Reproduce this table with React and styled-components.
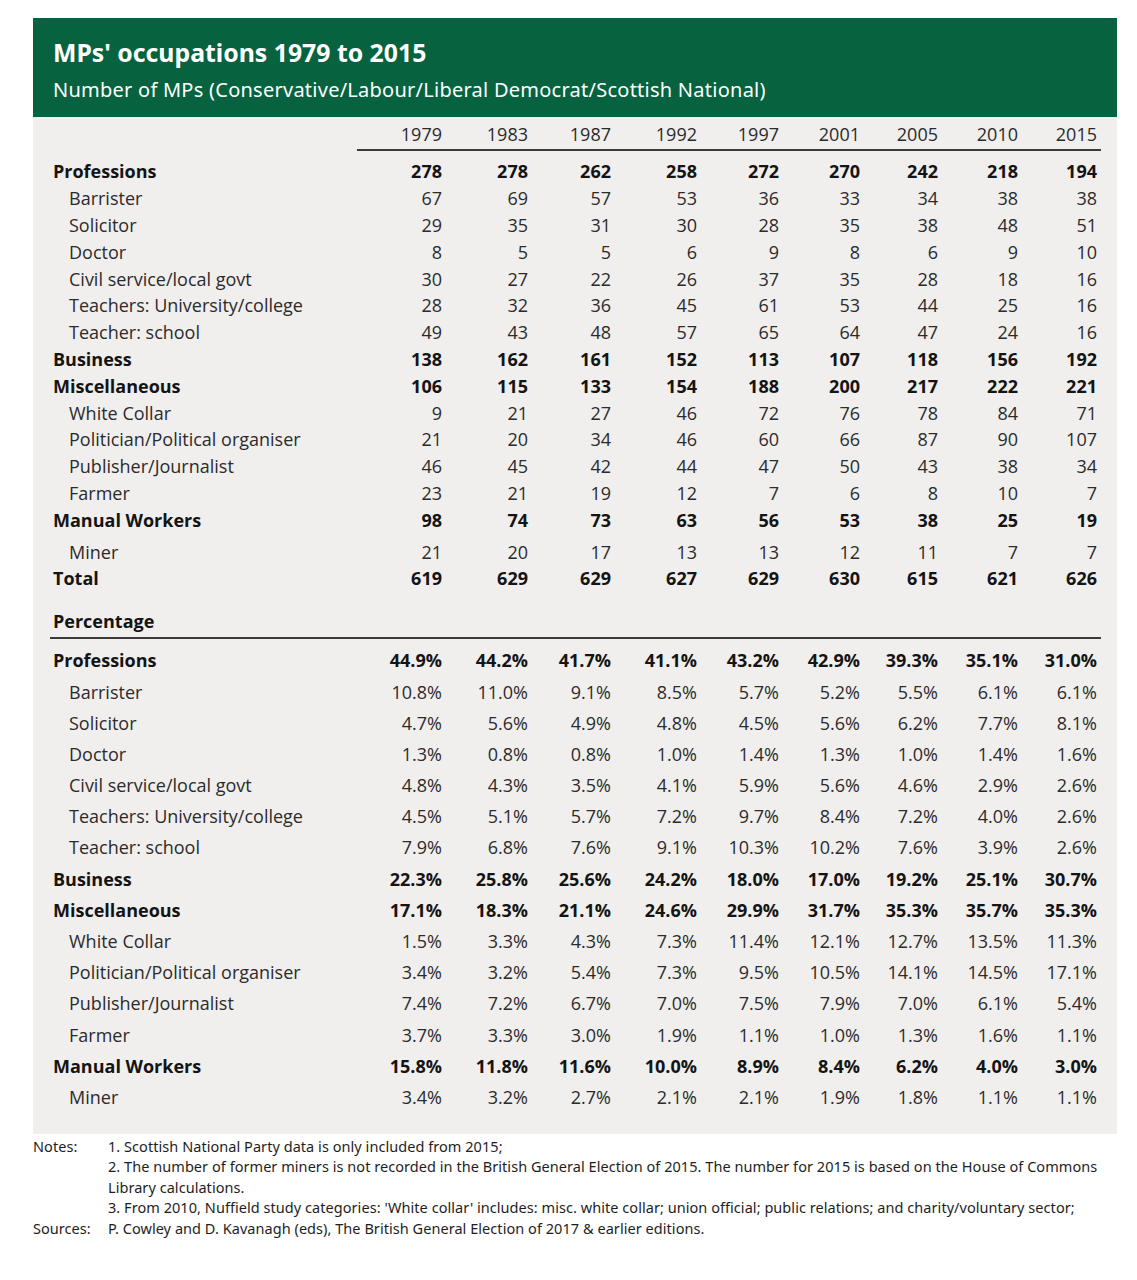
import React from "react";
import styled, { createGlobalStyle } from "styled-components";

const GlobalStyle = createGlobalStyle`
  html, body { margin: 0; padding: 0; background: #ffffff; }
  body { font-family: "Open Sans", "Liberation Sans", sans-serif; }
`;

const YEARS = ["1979", "1983", "1987", "1992", "1997", "2001", "2005", "2010", "2015"];
const COLS = "307px 85px 86px 83px 86px 82px 81px 78px 80px 79px";

const COUNTS = [
  { label: "Professions", bold: true, v: [278, 278, 262, 258, 272, 270, 242, 218, 194] },
  { label: "Barrister", v: [67, 69, 57, 53, 36, 33, 34, 38, 38] },
  { label: "Solicitor", v: [29, 35, 31, 30, 28, 35, 38, 48, 51] },
  { label: "Doctor", v: [8, 5, 5, 6, 9, 8, 6, 9, 10] },
  { label: "Civil service/local govt", v: [30, 27, 22, 26, 37, 35, 28, 18, 16] },
  { label: "Teachers: University/college", v: [28, 32, 36, 45, 61, 53, 44, 25, 16] },
  { label: "Teacher: school", v: [49, 43, 48, 57, 65, 64, 47, 24, 16] },
  { label: "Business", bold: true, v: [138, 162, 161, 152, 113, 107, 118, 156, 192] },
  { label: "Miscellaneous", bold: true, v: [106, 115, 133, 154, 188, 200, 217, 222, 221] },
  { label: "White Collar", v: [9, 21, 27, 46, 72, 76, 78, 84, 71] },
  { label: "Politician/Political organiser", v: [21, 20, 34, 46, 60, 66, 87, 90, 107] },
  { label: "Publisher/Journalist", v: [46, 45, 42, 44, 47, 50, 43, 38, 34] },
  { label: "Farmer", v: [23, 21, 19, 12, 7, 6, 8, 10, 7] },
  { label: "Manual Workers", bold: true, v: [98, 74, 73, 63, 56, 53, 38, 25, 19] },
  { label: "Miner", gap: true, v: [21, 20, 17, 13, 13, 12, 11, 7, 7] },
  { label: "Total", bold: true, v: [619, 629, 629, 627, 629, 630, 615, 621, 626] },
];

const PERCENTS = [
  { label: "Professions", bold: true, v: ["44.9%", "44.2%", "41.7%", "41.1%", "43.2%", "42.9%", "39.3%", "35.1%", "31.0%"] },
  { label: "Barrister", v: ["10.8%", "11.0%", "9.1%", "8.5%", "5.7%", "5.2%", "5.5%", "6.1%", "6.1%"] },
  { label: "Solicitor", v: ["4.7%", "5.6%", "4.9%", "4.8%", "4.5%", "5.6%", "6.2%", "7.7%", "8.1%"] },
  { label: "Doctor", v: ["1.3%", "0.8%", "0.8%", "1.0%", "1.4%", "1.3%", "1.0%", "1.4%", "1.6%"] },
  { label: "Civil service/local govt", v: ["4.8%", "4.3%", "3.5%", "4.1%", "5.9%", "5.6%", "4.6%", "2.9%", "2.6%"] },
  { label: "Teachers: University/college", v: ["4.5%", "5.1%", "5.7%", "7.2%", "9.7%", "8.4%", "7.2%", "4.0%", "2.6%"] },
  { label: "Teacher: school", v: ["7.9%", "6.8%", "7.6%", "9.1%", "10.3%", "10.2%", "7.6%", "3.9%", "2.6%"] },
  { label: "Business", bold: true, v: ["22.3%", "25.8%", "25.6%", "24.2%", "18.0%", "17.0%", "19.2%", "25.1%", "30.7%"] },
  { label: "Miscellaneous", bold: true, v: ["17.1%", "18.3%", "21.1%", "24.6%", "29.9%", "31.7%", "35.3%", "35.7%", "35.3%"] },
  { label: "White Collar", v: ["1.5%", "3.3%", "4.3%", "7.3%", "11.4%", "12.1%", "12.7%", "13.5%", "11.3%"] },
  { label: "Politician/Political organiser", v: ["3.4%", "3.2%", "5.4%", "7.3%", "9.5%", "10.5%", "14.1%", "14.5%", "17.1%"] },
  { label: "Publisher/Journalist", v: ["7.4%", "7.2%", "6.7%", "7.0%", "7.5%", "7.9%", "7.0%", "6.1%", "5.4%"] },
  { label: "Farmer", v: ["3.7%", "3.3%", "3.0%", "1.9%", "1.1%", "1.0%", "1.3%", "1.6%", "1.1%"] },
  { label: "Manual Workers", bold: true, v: ["15.8%", "11.8%", "11.6%", "10.0%", "8.9%", "8.4%", "6.2%", "4.0%", "3.0%"] },
  { label: "Miner", v: ["3.4%", "3.2%", "2.7%", "2.1%", "2.1%", "1.9%", "1.8%", "1.1%", "1.1%"] },
];

const Page = styled.div`
  padding: 18px 20px 0 33px;
  width: 1084px;
`;

const Header = styled.header`
  background: #07633f;
  color: #ffffff;
  height: 99px;
  box-sizing: border-box;
  padding: 19px 20px 0 20px;
  font-family: "Noto Sans", Lato, sans-serif;
`;

const Title = styled.h1`
  margin: 0;
  font-size: 24.8px;
  line-height: 30px;
  font-weight: 700;
`;

const Subtitle = styled.div`
  margin-top: 10px;
  font-size: 20px;
  line-height: 26px;
  font-weight: 400;
  letter-spacing: 0.25px;
`;

const Panel = styled.section`
  background: #f0efee;
  padding: 3px 0 21px 17px;
  color: #1c1c1c;
  font-size: 18px;
`;

const YearRow = styled.div`
  display: grid;
  grid-template-columns: ${COLS};
  height: 27px;
  align-items: center;
`;

const YearCell = styled.div`
  text-align: right;
  font-weight: 400;
  color: #2a2a2a;
`;

const Rule = styled.div`
  height: 2px;
  background: #3a3a3a;
  margin-left: ${(p) => p.$left}px;
  width: ${(p) => p.$width}px;
  margin-top: ${(p) => p.$top}px;
  margin-bottom: ${(p) => p.$bottom}px;
`;

const Row = styled.div`
  display: grid;
  grid-template-columns: ${COLS};
  align-items: center;
  height: ${(p) => p.$h}px;
  margin-top: ${(p) => (p.$gap ? 5 : 0)}px;
  font-weight: ${(p) => (p.$bold ? 700 : 400)};
  color: ${(p) => (p.$bold ? "#141414" : "#2b2b2b")};
`;

const Label = styled.div`
  padding-left: ${(p) => (p.$indent ? 19 : 3)}px;
  white-space: nowrap;
`;

const Num = styled.div`
  text-align: right;
  white-space: nowrap;
`;

const SectionTitle = styled.div`
  font-weight: 700;
  padding-left: 3px;
  height: 28px;
  line-height: 28px;
  margin-top: 15px;
  color: #141414;
`;

const Notes = styled.div`
  font-family: "Noto Sans", Lato, sans-serif;
  font-size: 14.5px;
  letter-spacing: 0.05px;
  line-height: 20.5px;
  color: #1e1e1e;
  padding-top: 2px;
  display: grid;
  grid-template-columns: 75px 1fr;
`;

const NoteKey = styled.div``;
const NoteText = styled.div``;

function DataRows({ rows, h }) {
  return rows.map((r) => (
    <Row key={r.label + h} $h={h} $bold={r.bold} $gap={r.gap}>
      <Label $indent={!r.bold}>{r.label}</Label>
      {r.v.map((n, i) => (
        <Num key={i}>{n}</Num>
      ))}
    </Row>
  ));
}

export default function App() {
  return (
    <>
      <GlobalStyle />
      <Page>
        <Header>
          <Title>MPs' occupations 1979 to 2015</Title>
          <Subtitle>Number of MPs (Conservative/Labour/Liberal Democrat/Scottish National)</Subtitle>
        </Header>
        <Panel>
          <YearRow>
            <div />
            {YEARS.map((y) => (
              <YearCell key={y}>{y}</YearCell>
            ))}
          </YearRow>
          <Rule $left={307} $width={744} $top={2} $bottom={7} />
          <DataRows rows={COUNTS} h={26.8} />
          <SectionTitle>Percentage</SectionTitle>
          <Rule $left={0} $width={1051} $top={2} $bottom={6} />
          <DataRows rows={PERCENTS} h={31.2} />
        </Panel>
        <Notes>
          <NoteKey>Notes:</NoteKey>
          <NoteText>
            1. Scottish National Party data is only included from 2015;
            <br />
            2. The number of former miners is not recorded in the British General Election of 2015. The number for 2015 is based on the House of Commons Library calculations.
            <br />
            3. From 2010, Nuffield study categories: 'White collar' includes: misc. white collar; union official; public relations; and charity/voluntary sector;
          </NoteText>
          <NoteKey>Sources:</NoteKey>
          <NoteText>P. Cowley and D. Kavanagh (eds), The British General Election of 2017 &amp; earlier editions.</NoteText>
        </Notes>
      </Page>
    </>
  );
}
